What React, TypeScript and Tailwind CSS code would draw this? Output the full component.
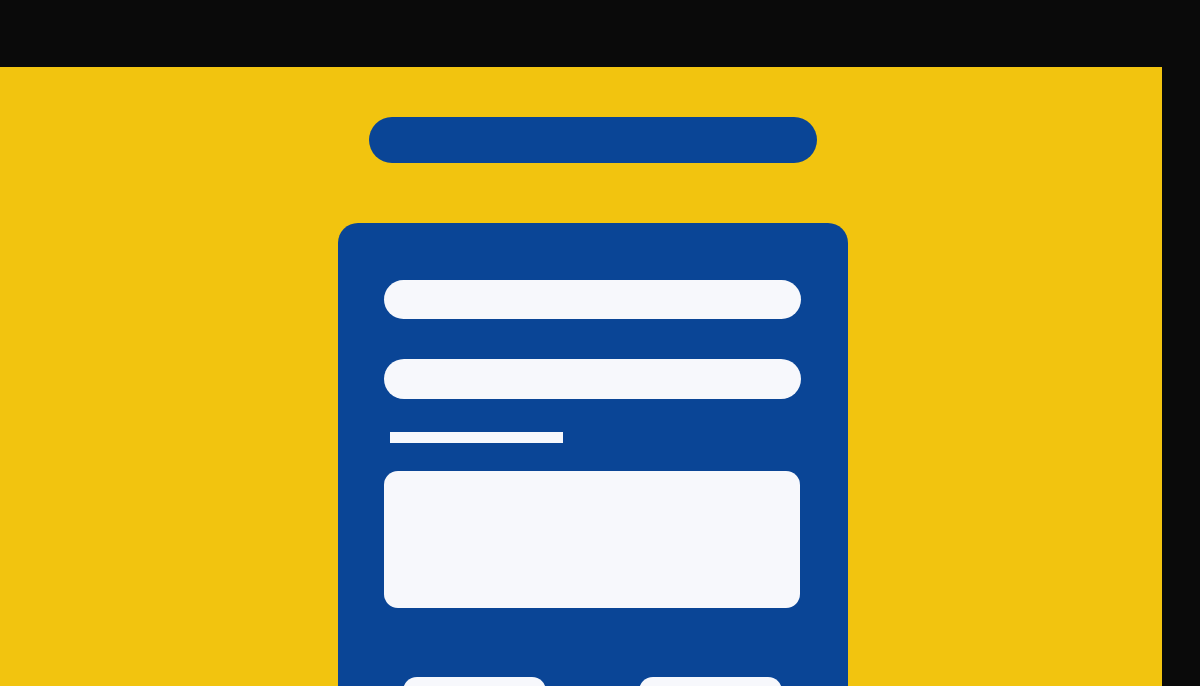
export default function App() {
  return (
    <div className="flex h-[686px] w-[1200px] flex-col overflow-hidden bg-[#0a0a0a]">
      <div className="h-[67px] shrink-0 bg-[#0a0a0a]" />
      <div className="flex flex-1 overflow-hidden">
        <main className="w-[1162px] shrink-0 bg-[#f2c40f] pl-[338px] pt-[50px]">
          <div className="flex w-[510px] flex-col items-center">
            <div className="h-[46px] w-[448px] rounded-full bg-[#0a4596]" />
            <section className="mt-[60px] flex h-[520px] w-[510px] flex-col rounded-[20px] bg-[#0a4596] px-[46px] pt-[57px]">
              <div className="h-[39px] w-[417px] rounded-full bg-[#f7f8fc]" />
              <div className="mt-[40px] h-[40px] w-[417px] rounded-full bg-[#f7f8fc]" />
              <div className="ml-[6px] mt-[33px] h-[11px] w-[173px] bg-[#f7f8fc]" />
              <div className="mt-[28px] h-[137px] w-[416px] rounded-[14px] bg-[#f7f8fc]" />
              <div className="mt-[69px] flex gap-[93px] pl-[19px]">
                <div className="h-[44px] w-[143px] rounded-[14px] bg-[#f7f8fc]" />
                <div className="h-[44px] w-[143px] rounded-[14px] bg-[#f7f8fc]" />
              </div>
            </section>
          </div>
        </main>
        <div className="flex-1 bg-[#0a0a0a]" />
      </div>
    </div>
  )
}
